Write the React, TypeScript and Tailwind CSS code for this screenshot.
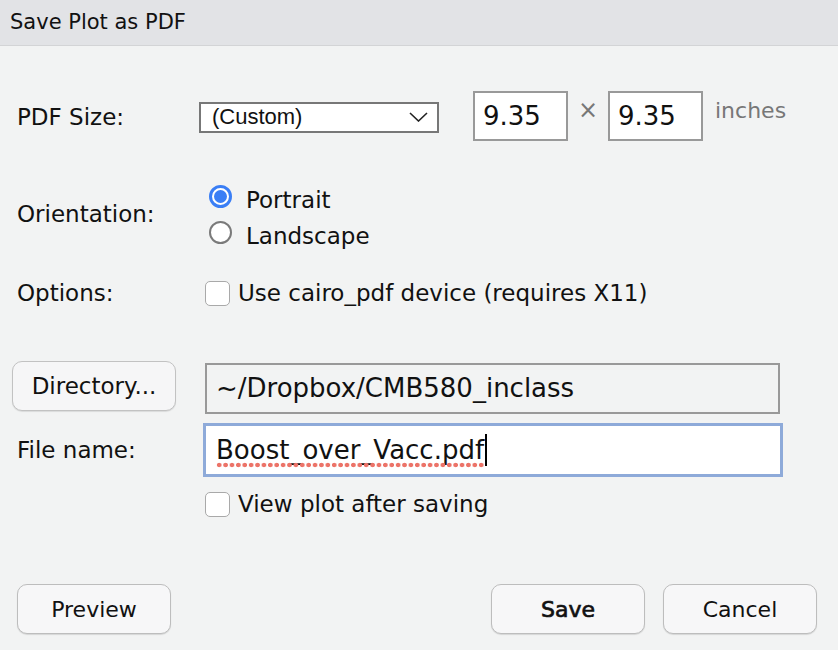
import React from "react";

const F = { fontFamily: '"DejaVu Sans", Verdana, sans-serif' };

function Checkbox() {
  return <div className="w-[25px] h-[25px] rounded-[5px] border-[1.5px] border-[#a9a9a9] bg-white shrink-0" />;
}

function Btn({ children, bold }: { children: React.ReactNode; bold?: boolean }) {
  return (
    <div
      className={`w-[154px] h-[50px] rounded-[10px] border-[1.5px] border-[#bdbdbd] bg-[#f7f7f8] shadow-[0_1px_1px_rgba(0,0,0,0.12)] flex items-center justify-center text-[22px] text-[#111] ${bold ? "[-webkit-text-stroke:0.7px_#111]" : ""}`}
    >
      {children}
    </div>
  );
}

export default function App() {
  return (
    <div className="w-[838px] h-[650px] bg-[#f2f3f3] flex flex-col text-[#111] overflow-hidden" style={F}>
      <div className="h-[46px] bg-[#e2e3e6] border-b border-[#d3d4d6] flex items-center pl-[10px] text-[21px] shrink-0">
        Save Plot as PDF
      </div>

      {/* PDF size row */}
      <div className="mt-[45px] h-[50px] flex items-center pl-[17px]">
        <div className="w-[182px] text-[23px] mt-[2px]">PDF Size:</div>
        <div
          className="w-[240px] h-[31px] border-2 border-[#777] bg-white flex items-center justify-between pl-[11px] pr-[8px] mt-[2px]"
          style={{ fontFamily: '"Liberation Sans", Arial, sans-serif' }}
        >
          <span className="text-[22px] leading-none">(Custom)</span>
          <svg width="19" height="10" viewBox="0 0 19 10" className="mr-[1px]">
            <path d="M1 1 L9.5 9 L18 1" fill="none" stroke="#222" strokeWidth="1.6" />
          </svg>
        </div>
        <div className="ml-[34px] w-[95px] h-[50px] border-2 border-[#999] bg-white flex items-center pl-[8px] text-[26px]">
          9.35
        </div>
        <div className="w-[40px] flex justify-center text-[24px] text-[#777] -mt-[12px]">×</div>
        <div className="w-[95px] h-[50px] border-2 border-[#999] bg-white flex items-center pl-[8px] text-[26px]">
          9.35
        </div>
        <div className="ml-[12px] text-[22px] text-[#777] -mt-[12px]">inches</div>
      </div>

      {/* Orientation */}
      <div className="mt-[37px] flex items-center pl-[17px]">
        <div className="w-[192px] text-[23px]">Orientation:</div>
        <div className="flex flex-col">
          <div className="h-[36px] flex items-center">
            <div className="w-[23px] h-[23px] rounded-full border-[3px] border-[#3a7ef5] bg-white flex items-center justify-center">
              <div className="w-[13px] h-[13px] rounded-full bg-[#3a7ef5]" />
            </div>
            <span className="ml-[14px] text-[23px] mt-[8px]">Portrait</span>
          </div>
          <div className="h-[36px] flex items-center">
            <div className="w-[23px] h-[23px] rounded-full border-2 border-[#7a7a7a] bg-white" />
            <span className="ml-[14px] text-[23px] mt-[8px]">Landscape</span>
          </div>
        </div>
      </div>

      {/* Options */}
      <div className="mt-[25px] h-[36px] flex items-center pl-[17px]">
        <div className="w-[188px] text-[23px]">Options:</div>
        <Checkbox />
        <span className="ml-[8px] text-[23px]">Use cairo_pdf device (requires X11)</span>
      </div>

      {/* Directory */}
      <div className="mt-[50px] flex items-start pl-[12px]">
        <div className="w-[164px] h-[50px] rounded-[10px] border-[1.5px] border-[#c2c2c2] bg-[#f6f6f7] shadow-[0_1px_1px_rgba(0,0,0,0.1)] flex items-center justify-center text-[23px]">
          Directory...
        </div>
        <div className="ml-[29px] mt-[2px] w-[575px] h-[51px] border-2 border-[#999] bg-[#f2f3f3] flex items-center pl-[9px] text-[26px]">
          ~/Dropbox/CMB580_inclass
        </div>
      </div>

      {/* File name */}
      <div className="mt-[9px] flex items-center pl-[17px]">
        <div className="w-[186px] text-[23px]">File name:</div>
        <div className="w-[580px] h-[54px] border-[3px] border-[#8eaad9] bg-white flex items-center pl-[10px] text-[26px]">
          <span className="relative">
            Boost_over_Vacc.pdf
            <span className="absolute left-0 right-0 bottom-[2px] h-[6px] bg-[radial-gradient(circle,#ec7368_2px,transparent_2.6px)] bg-[length:6.4px_6px] bg-repeat-x" />
          </span>
          <span className="w-[2px] h-[32px] bg-black ml-[1px]" />
        </div>
      </div>

      {/* View plot */}
      <div className="mt-[15px] h-[25px] flex items-center pl-[205px]">
        <Checkbox />
        <span className="ml-[8px] text-[23px]">View plot after saving</span>
      </div>

      {/* Buttons */}
      <div className="mt-[67px] flex items-center pl-[17px] pr-[21px]">
        <Btn>Preview</Btn>
        <div className="flex-1" />
        <Btn bold>Save</Btn>
        <div className="ml-[18px]">
          <Btn>Cancel</Btn>
        </div>
      </div>
    </div>
  );
}
